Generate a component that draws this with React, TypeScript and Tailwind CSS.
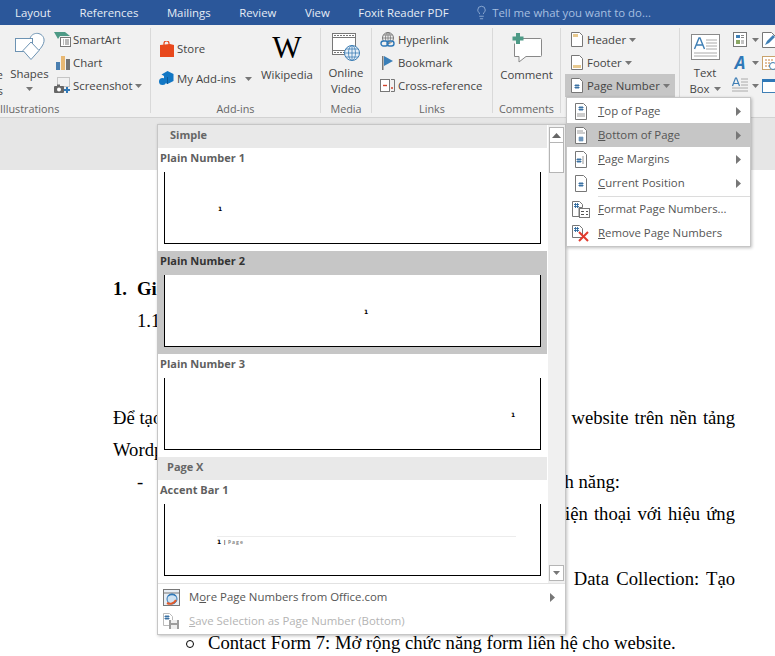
import type { ReactNode } from "react";
import { Lightbulb } from "lucide-react";

const ui = "[font-family:'Open_Sans',sans-serif]";

const Caret = ({ color = "#777" }: { color?: string }) => (
  <svg width="7" height="4" viewBox="0 0 7 4" className="shrink-0">
    <path d="M0 0h7L3.5 4z" fill={color} />
  </svg>
);

const SideArrow = ({ color = "#777" }: { color?: string }) => (
  <svg width="5" height="9" viewBox="0 0 5 9">
    <path d="M0 0l5 4.500L0 9z" fill={color} />
  </svg>
);

// ---- ribbon icons, all hand drawn
const SmartArtIcon = () => (
  <svg width="17" height="16" viewBox="0 0 17 16">
    <path d="M0 0h11l5 4H6L4 7z" fill="#4d9a86" />
    <rect x="6.500" y="5.500" width="10" height="9" fill="#fff" stroke="#777" />
    <path d="M9 8h1M11 8h4M9 10h1M11 10h4M9 12h1M11 12h4" stroke="#777" />
  </svg>
);
const ChartIcon = () => (
  <svg width="16" height="16" viewBox="0 0 16 16">
    <rect x="1" y="7" width="4" height="8" fill="#4a7fb0" />
    <rect x="6" y="1" width="4" height="14" fill="#e8b873" />
    <rect x="11" y="4" width="4" height="11" fill="#737373" />
  </svg>
);
const ScreenshotIcon = () => (
  <svg width="17" height="17" viewBox="0 0 17 17">
    <rect x="3.500" y="0.500" width="12" height="9" fill="none" stroke="#999" strokeDasharray="1 1" />
    <rect x="0" y="9" width="10" height="7" rx="1" fill="#666" />
    <rect x="3" y="7.500" width="3" height="2" fill="#666" />
    <circle cx="5" cy="12.500" r="2" fill="#fff" />
    <path d="M13 10v6M10 13h6" stroke="#2f78b7" strokeWidth="2" />
  </svg>
);
const StoreIcon = () => (
  <svg width="14" height="16" viewBox="0 0 14 16">
    <path d="M4 4V2.500a2.500 2.500 0 0 1 5 0V4" fill="none" stroke="#e8481c" strokeWidth="1.200" />
    <path d="M0 4l10-1 4 1v12H0z" fill="#e8481c" />
  </svg>
);
const AddInsIcon = () => (
  <svg width="15" height="15" viewBox="0 0 15 15">
    <path d="M8.500 0l6 3v7l-6 3-3.500-1.800V5L2.500 3.500z" fill="#1277c4" />
    <circle cx="3.500" cy="10.500" r="3.500" fill="#1277c4" />
    <path d="M8.500 6v7" stroke="#0c5c9c" />
  </svg>
);
const VideoIcon = () => (
  <svg width="30" height="30" viewBox="0 0 30 30">
    <rect x="1.500" y="1.500" width="23" height="21" fill="#fff" stroke="#777" />
    <path d="M2 5.500h22M2 18.500h22" stroke="#777" />
    <path d="M3 3.500h20M3 20.500h12" stroke="#777" strokeDasharray="2 1" />
    <circle cx="21" cy="21" r="7.500" fill="#e6f0f8" stroke="#3f7fb5" />
    <path d="M13.500 21h15M21 13.500v15M15 17h12M15 25h12" stroke="#3f7fb5" strokeWidth="0.800" />
    <ellipse cx="21" cy="21" rx="3.500" ry="7.500" fill="none" stroke="#3f7fb5" strokeWidth="0.800" />
  </svg>
);
const HyperlinkIcon = () => (
  <svg width="16" height="16" viewBox="0 0 16 16">
    <circle cx="8" cy="6" r="5.500" fill="none" stroke="#777" />
    <path d="M2.500 6h11M8 .5v11M3.500 3h9" stroke="#777" strokeWidth="0.800" />
    <ellipse cx="8" cy="6" rx="2.500" ry="5.500" fill="none" stroke="#777" strokeWidth="0.800" />
    <rect x="1" y="9" width="7" height="5" rx="2.500" fill="#f1f1f1" stroke="#2f78b7" strokeWidth="1.400" />
    <rect x="7" y="9" width="7" height="5" rx="2.500" fill="none" stroke="#2f78b7" strokeWidth="1.400" />
  </svg>
);
const BookmarkIcon = () => (
  <svg width="15" height="15" viewBox="0 0 15 15">
    <rect x="2" y="1" width="1.500" height="14" fill="#777" />
    <path d="M4 1l9 5-9 5z" fill="#3a7fb8" />
  </svg>
);
const CrossRefIcon = () => (
  <svg width="16" height="16" viewBox="0 0 16 16">
    <rect x="0.500" y="1.500" width="9" height="12" fill="#fff" stroke="#777" />
    <path d="M3 7.500h4" stroke="#d0442c" strokeWidth="1.400" />
    <path d="M11 1.500h3.500v12H11" fill="none" stroke="#777" />
    <path d="M11 10h2" stroke="#d0442c" strokeWidth="1.400" />
  </svg>
);
const CommentIcon = () => (
  <svg width="32" height="30" viewBox="0 0 32 30">
    <path d="M7.500 5.500h22a1 1 0 0 1 1 1v16a1 1 0 0 1-1 1H15L8 29v-5.500H3.500v-13" fill="#fff" stroke="#888" />
    <path d="M7 0v11M1.500 5.500h11" stroke="#4d9a86" strokeWidth="4" />
  </svg>
);
const HeaderIcon = () => (
  <svg width="12" height="15" viewBox="0 0 12 15">
    <path d="M.5.500h8l3 3v11H.5z" fill="#fff" stroke="#777" />
    <rect x="2" y="2" width="5" height="3" fill="#e8c98f" />
  </svg>
);
const FooterIcon = () => (
  <svg width="12" height="15" viewBox="0 0 12 15">
    <path d="M.5.500h8l3 3v11H.5z" fill="#fff" stroke="#777" />
    <rect x="2" y="10" width="8" height="3" fill="#e8c98f" />
  </svg>
);
const Hash = ({ x, y }: { x: number; y: number }) => (
  <path
    transform={`translate(${x} ${y})`}
    d="M1.500 0v5M3.500 0v5M0 1.500h5M0 3.500h5"
    stroke="#2f6a9e"
    strokeWidth="0.900"
    fill="none"
  />
);
const PageNumberIcon = () => (
  <svg width="12" height="15" viewBox="0 0 12 15">
    <path d="M.5.500h8l3 3v11H.5z" fill="#fff" stroke="#777" />
    <Hash x={3.500} y={6} />
  </svg>
);
const TextBoxIcon = () => (
  <svg width="29" height="26" viewBox="0 0 29 26">
    <rect x="0.500" y="0.500" width="28" height="25" fill="#fff" stroke="#8a8a8a" />
    <path d="M3.500 15L8 4h1l4.500 11M5.500 11h6" fill="none" stroke="#3f7fb5" strokeWidth="1.400" />
    <path d="M15 6h11M15 9h11M15 12h11M15 15h11M3 19h23M3 22h23" stroke="#aaa" />
  </svg>
);
const QuickPartsIcon = () => (
  <svg width="14" height="15" viewBox="0 0 14 15">
    <rect x="0.500" y="0.500" width="13" height="14" fill="#fff" stroke="#777" />
    <rect x="3" y="3" width="4" height="3" fill="#3f7fb5" />
    <path d="M8 3.500h3M8 5.500h3" stroke="#888" />
    <rect x="3" y="8" width="4" height="4" fill="#8aa764" />
    <path d="M8 9h3M8 11h3" stroke="#888" />
  </svg>
);
const WordArtIcon = () => (
  <span className="text-[17px] leading-none font-bold italic text-[#2f78b7]">A</span>
);
const DropCapIcon = () => (
  <svg width="16" height="17" viewBox="0 0 16 17">
    <path d="M.5 9L3.500 1h1l3 8M2 6.500h4" fill="none" stroke="#3f7fb5" strokeWidth="1.200" />
    <path d="M9 2h7M9 5h7M9 8h7M0 11h16M0 14h16" stroke="#aaa" />
  </svg>
);
const SignatureIcon = () => (
  <svg width="14" height="16" viewBox="0 0 14 16">
    <path d="M.5.500h9l4 4v11H.5z" fill="#fff" stroke="#777" />
    <path d="M3 13l2-4 6-6 2 2-6 6z" fill="#3f7fb5" />
  </svg>
);
const DateIcon = () => (
  <svg width="14" height="15" viewBox="0 0 14 15">
    <rect x="0.500" y="1.500" width="13" height="13" fill="#fff" stroke="#c9a26b" />
    <path d="M3 5h8M3 8h8M3 11h5" stroke="#c9813a" strokeDasharray="2 1" />
    <circle cx="11" cy="11" r="3.500" fill="#fff" stroke="#3f7fb5" />
  </svg>
);
const ObjectIcon = () => (
  <svg width="14" height="14" viewBox="0 0 14 14">
    <rect x="0.500" y="0.500" width="16" height="13" fill="#fff" stroke="#3f7fb5" />
    <rect x="0" y="0" width="17" height="3" fill="#2f78b7" />
  </svg>
);

// ---- dropdown menu icons
const PageLines = ({ children }: { children: ReactNode }) => (
  <svg width="16" height="17" viewBox="0 0 16 17">
    <path d="M2.500 .5h8l3 3v13h-11z" fill="#fff" stroke="#777" />
    {children}
  </svg>
);
const GreyLines = ({ d }: { d: string }) => <path d={d} stroke="#9a9a9a" fill="none" />;

const TopPageIcon = () => (
  <PageLines>
    <Hash x={5.500} y={3} />
    <GreyLines d="M4 11h8M4 13h8" />
  </PageLines>
);
const BottomPageIcon = () => (
  <PageLines>
    <GreyLines d="M4 4h6M4 6h8" />
    <Hash x={5.500} y={9.500} />
  </PageLines>
);
const MarginPageIcon = () => (
  <PageLines>
    <Hash x={3.500} y={7} />
    <GreyLines d="M10 5v8" />
  </PageLines>
);
const CurrentPageIcon = () => (
  <PageLines>
    <Hash x={5.500} y={7} />
  </PageLines>
);
const FormatIcon = () => (
  <svg width="18" height="17" viewBox="0 0 18 17">
    <path d="M.5.500h7l3 3v3H7v9H.5z" fill="#fff" stroke="#777" />
    <Hash x={2} y={2} />
    <rect x="7.500" y="7.500" width="10" height="9" fill="#fff" stroke="#777" />
    <path d="M9 10.500h3M14 10.500h2M9 13.500h3M14 13.500h2" stroke="#555" />
  </svg>
);
const RemoveIcon = () => (
  <svg width="18" height="17" viewBox="0 0 18 17">
    <path d="M.5.500h7l3 3v9H.5z" fill="#fff" stroke="#777" />
    <Hash x={2} y={2} />
    <path d="M7 7l9 9M16 7l-9 9" stroke="#e23b2e" strokeWidth="2" />
  </svg>
);
const OfficeIcon = () => (
  <svg width="17" height="17" viewBox="0 0 17 17">
    <rect x="0.500" y="0.500" width="16" height="16" fill="#e8eef5" stroke="#777" />
    <path d="M1 4h15" stroke="#777" />
    <circle cx="9" cy="10" r="5" fill="#cfe2f2" stroke="#2f78b7" />
    <path d="M4 14c3 1.500 7 1 9-3" fill="none" stroke="#e0592a" strokeWidth="2" />
    <path d="M5 7c2-2 6-2 8 0" fill="none" stroke="#2f78b7" strokeWidth="1.500" />
  </svg>
);
const SaveIcon = () => (
  <svg width="17" height="17" viewBox="0 0 17 17">
    <path d="M.5.500h6l3 3v9H.5z" fill="#fff" stroke="#bbb" />
    <Hash x={1.500} y={2} />
    <rect x="6" y="7" width="10" height="9" fill="#9c9c9c" />
    <rect x="8" y="7" width="6" height="3" fill="#eee" />
    <rect x="8" y="12" width="6" height="4" fill="#eee" />
  </svg>
);

// ---- ribbon parts
const SmallItem = ({
  icon,
  label,
  caret,
  active,
  className = "",
}: {
  icon: ReactNode;
  label: string;
  caret?: boolean;
  active?: boolean;
  className?: string;
}) => (
  <div className={`flex h-[23px] items-center whitespace-nowrap ${active ? "bg-[#c6c6c6]" : ""} ${className}`}>
    <span className="flex w-[17px] shrink-0 justify-center">{icon}</span>
    <span className="ml-[2px]">{label}</span>
    {caret && (
      <span className="ml-[3px]">
        <Caret />
      </span>
    )}
  </div>
);

const LargeItem = ({
  icon,
  lines,
  className = "",
}: {
  icon: ReactNode;
  lines: ReactNode[];
  className?: string;
}) => (
  <div className={`flex flex-col items-center leading-[16px] ${className}`}>
    <div className="flex h-[39px] items-center justify-center">{icon}</div>
    {lines.map((line, i) => (
      <div key={i} className="flex h-[16px] items-center gap-[4px] whitespace-nowrap">
        {line}
      </div>
    ))}
  </div>
);

const Group = ({
  label,
  width,
  children,
  labelClass = "text-center",
}: {
  label: string;
  width: string;
  children: ReactNode;
  labelClass?: string;
}) => (
  <section className={`flex h-[85px] shrink-0 flex-col border-r border-[#d9d9d9] ${width}`}>
    <div className="flex h-[69px] shrink-0">{children}</div>
    <div className={`mt-[4px] h-[16px] shrink-0 text-[10.8px] whitespace-nowrap leading-[16px] text-[#666] ${labelClass}`}>
      {label}
    </div>
  </section>
);

const Ribbon = () => (
  <div className={`flex h-[93px] overflow-hidden border-b border-[#d2d2d2] bg-[#f1f1f1] pt-[3px] text-[11.4px] text-[#444] ${ui}`}>
    <Group label="Illustrations" width="w-[151px]" labelClass="text-left">
      <div className="flex w-[5px] flex-col items-end overflow-hidden pt-[39px] pr-[2px] leading-[16px]">
        <span>Online</span>
        <span>Pictures</span>
      </div>
      <LargeItem
        className="w-[49px]"
        icon={
          <svg width="32" height="32" viewBox="0 0 32 32">
            <path d="M16 8c1-7 12-8 14 0 1 6-6 13-12 17" fill="#fff" stroke="#6d93b3" />
            <rect x="1.500" y="7.500" width="17" height="13" fill="#fff" stroke="#6d93b3" />
            <path d="M17 11l8 8.500-8 9-8-9z" fill="#fff" stroke="#6d93b3" />
          </svg>
        }
        lines={["Shapes", <Caret />]}
      />
      <div>
        <SmallItem icon={<SmartArtIcon />} label="SmartArt" />
        <SmallItem icon={<ChartIcon />} label="Chart" />
        <SmallItem icon={<ScreenshotIcon />} label="Screenshot" caret />
      </div>
    </Group>
    <Group label="Add-ins" width="w-[170px]">
      <div className="w-[109px] pt-[9px] pl-[7px]">
        <SmallItem icon={<StoreIcon />} label="Store" />
        <div className="mt-[7px] flex h-[23px] items-center whitespace-nowrap">
          <span className="flex w-[17px] shrink-0 justify-center">
            <AddInsIcon />
          </span>
          <span className="ml-[2px]">My Add-ins</span>
          <span className="ml-[9px]">
            <Caret />
          </span>
        </div>
      </div>
      <LargeItem
        className="w-[54px]"
        icon={<span className="text-[31px] leading-none text-black [font-family:'Liberation_Serif',serif]">W</span>}
        lines={["Wikipedia"]}
      />
    </Group>
    <Group label="Media" width="w-[51px]">
      <LargeItem className="w-[50px]" icon={<VideoIcon />} lines={["Online", "Video"]} />
    </Group>
    <Group label="Links" width="w-[121px]">
      <div className="pl-[7px]">
        <SmallItem icon={<HyperlinkIcon />} label="Hyperlink" />
        <SmallItem icon={<BookmarkIcon />} label="Bookmark" />
        <SmallItem icon={<CrossRefIcon />} label="Cross-reference" />
      </div>
    </Group>
    <Group label="Comments" width="w-[68px]">
      <LargeItem className="w-[67px]" icon={<CommentIcon />} lines={["Comment"]} />
    </Group>
    <Group label="" width="w-[119px]">
      <div className="ml-[4px] w-[110px]">
        <SmallItem icon={<HeaderIcon />} label="Header" caret className="pl-[3px]" />
        <SmallItem icon={<FooterIcon />} label="Footer" caret className="pl-[3px]" />
        <SmallItem icon={<PageNumberIcon />} label="Page Number" caret active className="pl-[3px]" />
      </div>
    </Group>
    <div className="flex h-[69px] shrink-0">
      <LargeItem
        className="w-[50px]"
        icon={<TextBoxIcon />}
        lines={[
          "Text",
          <>
            Box <Caret />
          </>,
        ]}
      />
      <div className="ml-[2px] w-[30px]">
        {[<QuickPartsIcon />, <WordArtIcon />, <DropCapIcon />].map((icon, i) => (
          <div key={i} className="flex h-[23px] items-center gap-[4px]">
            <span className="flex w-[16px] justify-center">{icon}</span>
            <Caret />
          </div>
        ))}
      </div>
      <div>
        <div className="flex h-[23px] items-center"><SignatureIcon /></div>
        <div className="flex h-[23px] items-center"><DateIcon /></div>
        <div className="flex h-[23px] items-center"><ObjectIcon /></div>
      </div>
    </div>
  </div>
);

// ---- page number menu
const menuItems: { icon: ReactNode; key: string; rest: string; arrow?: boolean; active?: boolean }[] = [
  { icon: <TopPageIcon />, key: "T", rest: "op of Page", arrow: true },
  { icon: <BottomPageIcon />, key: "B", rest: "ottom of Page", arrow: true, active: true },
  { icon: <MarginPageIcon />, key: "P", rest: "age Margins", arrow: true },
  { icon: <CurrentPageIcon />, key: "C", rest: "urrent Position", arrow: true },
];

const MenuRow = ({ icon, letter, rest, arrow, active }: { icon: ReactNode; letter: string; rest: string; arrow?: boolean; active?: boolean }) => (
  <div className={`flex h-[24px] items-center pl-[4px] ${active ? "bg-[#c6c6c6]" : ""}`}>
    <span className="flex w-[20px] justify-center">{icon}</span>
    <span className="ml-[7px] flex-1 whitespace-nowrap">
      <span className="underline">{letter}</span>
      {rest}
    </span>
    {arrow && (
      <span className="mr-[9px]">
        <SideArrow />
      </span>
    )}
  </div>
);

const PageNumberMenu = () => (
  <div className={`absolute top-[97px] left-[566px] z-20 w-[185px] border border-[#c6c6c6] bg-white py-px text-[11.4px] text-[#555] shadow-[1px_1px_3px_rgba(0,0,0,0.25)] ${ui}`}>
    {menuItems.map((item) => (
      <MenuRow key={item.key} icon={item.icon} letter={item.key} rest={item.rest} arrow={item.arrow} active={item.active} />
    ))}
    <div className="mt-px ml-[31px] h-px bg-[#dcdcdc]" />
    <MenuRow icon={<FormatIcon />} letter="F" rest="ormat Page Numbers..." />
    <MenuRow icon={<RemoveIcon />} letter="R" rest="emove Page Numbers" />
  </div>
);

// ---- gallery
const Preview = ({ children, align }: { children: ReactNode; align: string }) => (
  <div className={`mx-[6px] h-[72px] border-x border-b border-black bg-white ${align}`}>{children}</div>
);

const NumberMark = () => (
  <div className="text-[6px] leading-none font-bold text-black [font-family:'DejaVu_Sans',sans-serif]">1</div>
);

const GalleryItem = ({ label, active, children }: { label: string; active?: boolean; children: ReactNode }) => (
  <div className={`h-[103px] ${active ? "bg-[#c6c6c6] text-[#333]" : "text-[#5f5f5f]"}`}>
    <div className="flex h-[24px] items-center pb-[4px] pl-[2px] font-bold">{label}</div>
    {children}
  </div>
);

const GallerySection = ({ label, pl }: { label: string; pl: string }) => (
  <div className={`flex h-[23px] items-center bg-[#e9e9e9] pb-[2px] font-bold text-[#666] ${pl}`}>{label}</div>
);

const Gallery = () => (
  <div className={`absolute top-[124px] left-[157px] z-10 w-[409px] border border-[#c6c6c6] bg-white text-[11px] shadow-[1px_1px_3px_rgba(0,0,0,0.25)] ${ui}`}>
    <div className="flex h-[458px]">
      <div className="h-[458px] w-[390px] overflow-hidden">
        <GallerySection label="Simple" pl="pl-[12px]" />
        <GalleryItem label="Plain Number 1">
          <Preview align="pt-[34px] pl-[53px]">
            <NumberMark />
          </Preview>
        </GalleryItem>
        <GalleryItem label="Plain Number 2" active>
          <Preview align="pt-[34px] pl-[199px]">
            <NumberMark />
          </Preview>
        </GalleryItem>
        <GalleryItem label="Plain Number 3">
          <Preview align="pt-[34px] pl-[346px]">
            <NumberMark />
          </Preview>
        </GalleryItem>
        <GallerySection label="Page X" pl="pl-[9px]" />
        <GalleryItem label="Accent Bar 1">
          <Preview align="pt-[32px] pl-[52px]">
            <div className="h-px w-[299px] bg-[#ececec]" />
            <div className="mt-[2px] flex items-center gap-[1px] text-[5px] leading-none font-bold tracking-[1px] text-[#888]">
              <NumberMark />
              <span className="text-black">|</span>
              <span>Page</span>
            </div>
          </Preview>
        </GalleryItem>
      </div>
      <div className="ml-px flex w-[17px] flex-col items-center bg-[#f0f0f0] py-[2px]">
        <div className="flex h-[16px] w-[15px] items-center justify-center border border-[#b5b5b5] bg-white">
          <svg width="9" height="5" viewBox="0 0 9 5"><path d="M0 5L4.500 0 9 5z" fill="#666" /></svg>
        </div>
        <div className="h-[30px] w-[15px] border border-t-0 border-[#b5b5b5] bg-white" />
        <div className="flex-1" />
        <div className="flex h-[16px] w-[15px] items-center justify-center border border-[#b5b5b5] bg-white">
          <Caret color="#777" />
        </div>
      </div>
    </div>
    <div className="h-px bg-[#e2e2e2]" />
    <div className="py-px text-[11.4px]">
      <div className="flex h-[24px] items-center pl-[4px] text-[#555]">
        <span className="flex w-[18px] justify-center"><OfficeIcon /></span>
        <span className="ml-[9px] flex-1">
          <span>M</span><span className="underline">o</span>re Page Numbers from Office.com
        </span>
        <span className="mr-[10px]"><SideArrow /></span>
      </div>
      <div className="flex h-[24px] items-center pl-[4px] text-[#b4b4b4]">
        <span className="flex w-[18px] justify-center"><SaveIcon /></span>
        <span className="ml-[9px]">
          <span className="underline">S</span>ave Selection as Page Number (Bottom)
        </span>
      </div>
    </div>
  </div>
);

// ---- document behind the menus
const Line = ({ children, className = "" }: { children?: ReactNode; className?: string }) => (
  <div className={`h-[32.2px] whitespace-nowrap ${className}`}>{children}</div>
);

const Document = () => (
  <main className="h-[486px] overflow-hidden bg-white pt-[103px] pr-[40px] pl-[113px] text-[18.67px] leading-[32.2px] text-black [font-family:'Liberation_Serif',serif]">
    <Line className="font-bold">
      1.<span className="ml-[10px]">Giới thiệu</span>
    </Line>
    <Line className="pl-[24px]">1.1 Mục tiêu</Line>
    <Line />
    <Line />
    <Line className="flex justify-between">
      <span>Để tạo ra một trang</span>
      <span className="[word-spacing:1.5px]">website trên nền tảng</span>
    </Line>
    <Line>Wordpress</Line>
    <Line className="flex pl-[24px]">
      -<span className="mr-[115px] ml-auto">các plugin có tính năng:</span>
    </Line>
    <Line className="text-right [word-spacing:1.5px]">
      Giao diện thích ứng trên máy tính và điện thoại với hiệu ứng
    </Line>
    <Line />
    <Line className="text-right [word-spacing:2.5px]">
      <span className="mr-[4px]">.</span> Data Collection: Tạo
    </Line>
    <Line />
    <Line className="flex pl-[73px]">
      <span className="mt-[13px] mr-[14px] h-[8px] w-[8px] rounded-full border border-black" />
      Contact Form 7: Mở rộng chức năng form liên hệ cho website.
    </Line>
  </main>
);

export default function App() {
  return (
    <div className="relative h-[656px] w-[775px] overflow-hidden bg-white">
      <nav className={`flex h-[25px] items-center gap-[28.5px] bg-[#2b579a] pl-[15px] text-[11.4px] whitespace-nowrap text-[#e6ecf5] ${ui}`}>
        <span>Layout</span>
        <span>References</span>
        <span>Mailings</span>
        <span>Review</span>
        <span>View</span>
        <span>Foxit Reader PDF</span>
        <span className="-ml-[3px] flex items-center gap-[3px] text-[#a6bfe0]">
          <Lightbulb size={15} strokeWidth={1.2} />
          Tell me what you want to do...
        </span>
      </nav>
      <Ribbon />
      <div className="h-[52px] bg-[#e6e6e6]" />
      <Document />
      <Gallery />
      <PageNumberMenu />
    </div>
  );
}
